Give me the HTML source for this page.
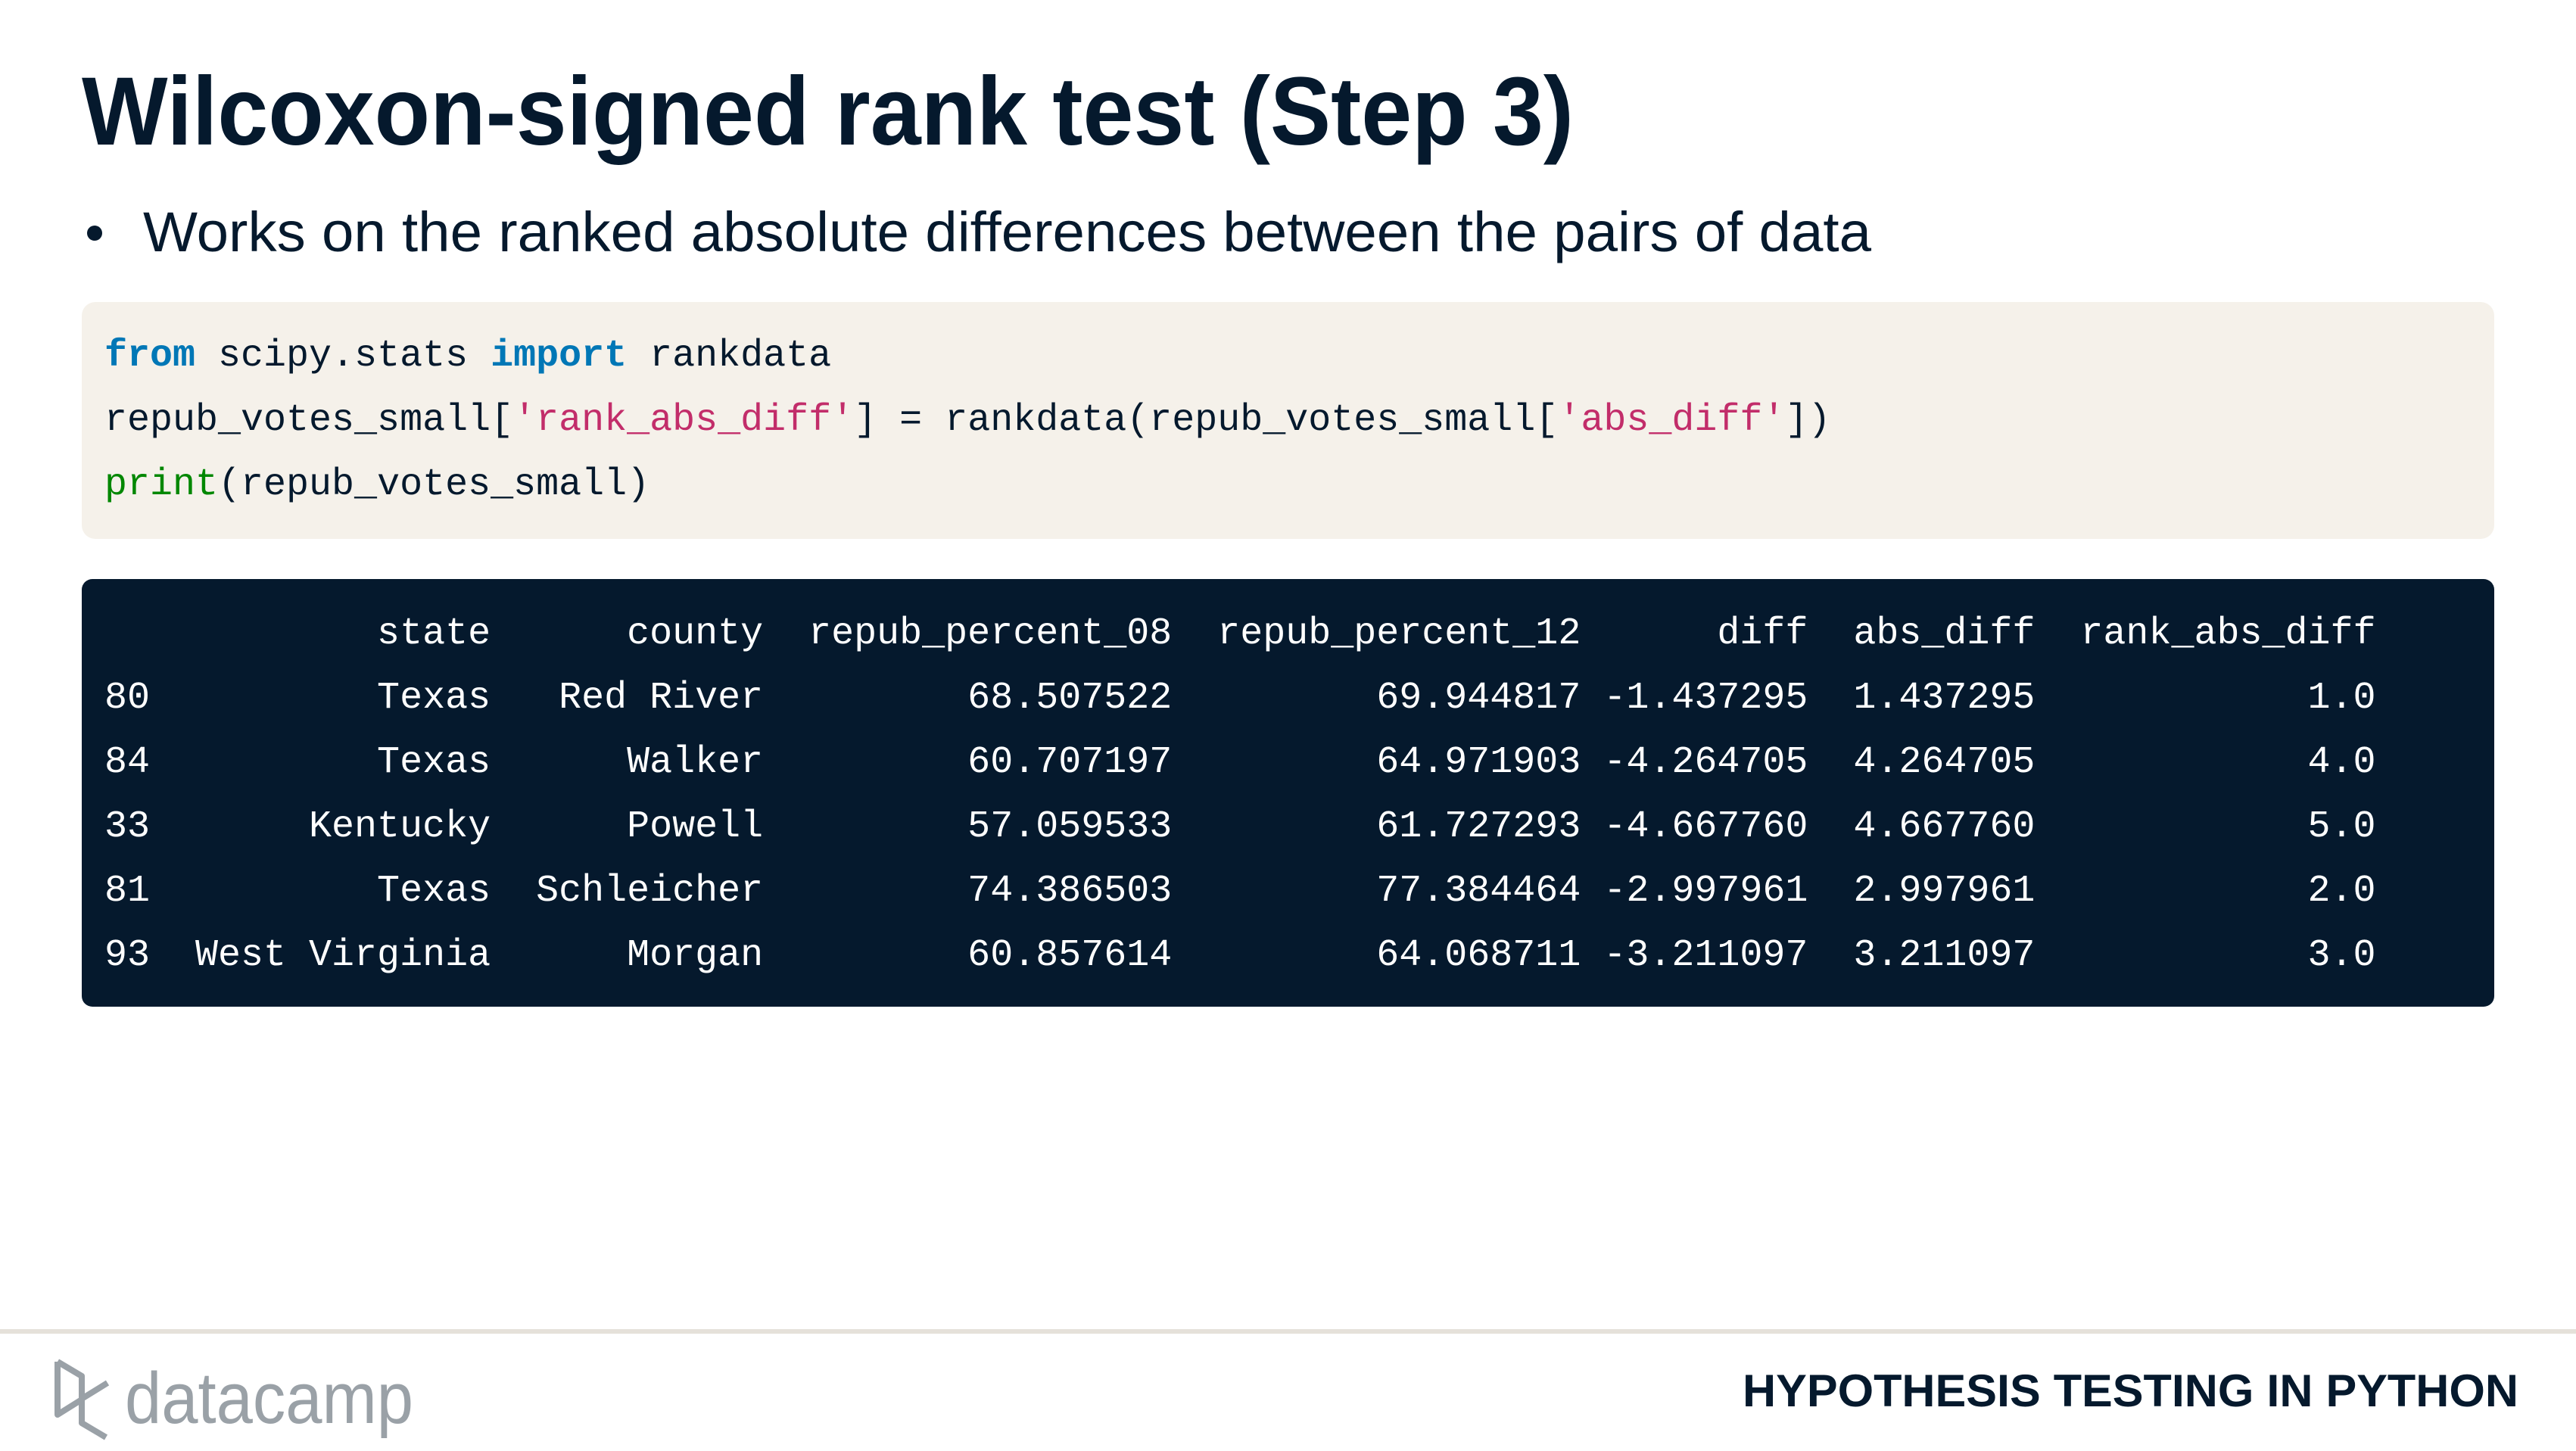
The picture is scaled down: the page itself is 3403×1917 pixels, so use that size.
<!DOCTYPE html>
<html><head><meta charset="utf-8"><style>
html,body{margin:0;padding:0;background:#fff;}
svg{display:block;}
.m{font-family:"Liberation Mono",monospace;font-size:50px;white-space:pre;}
</style></head><body>
<svg width="3403" height="1917" xmlns="http://www.w3.org/2000/svg">
<rect width="3403" height="1917" fill="#fff"/>
<text x="108" y="191" font-family="Liberation Sans, sans-serif" font-weight="bold" font-size="128" fill="#05192d" textLength="1971" lengthAdjust="spacingAndGlyphs">Wilcoxon-signed rank test (Step 3)</text>
<circle cx="125" cy="308" r="10" fill="#05192d"/>
<text x="189" y="332" font-family="Liberation Sans, sans-serif" font-size="74" fill="#05192d" textLength="2283" lengthAdjust="spacingAndGlyphs">Works on the ranked absolute differences between the pairs of data</text>
<rect x="108" y="399" width="3187" height="313" rx="18" fill="#f5f1ea"/>
<g class="m" fill="#05192d">
<text x="138" y="483" xml:space="preserve"><tspan fill="#0077b6" font-weight="bold">from</tspan> scipy.stats <tspan fill="#0077b6" font-weight="bold">import</tspan> rankdata</text>
<text x="138" y="568" xml:space="preserve">repub_votes_small[<tspan fill="#c22d6a">'rank_abs_diff'</tspan>] = rankdata(repub_votes_small[<tspan fill="#c22d6a">'abs_diff'</tspan>])</text>
<text x="138" y="653" xml:space="preserve"><tspan fill="#008700">print</tspan>(repub_votes_small)</text>
</g>
<rect x="108" y="765" width="3187" height="565" rx="14" fill="#05192d"/>
<g class="m" fill="#ffffff">
<text x="138" y="850" xml:space="preserve">            state      county  repub_percent_08  repub_percent_12      diff  abs_diff  rank_abs_diff</text>
<text x="138" y="935" xml:space="preserve">80          Texas   Red River         68.507522         69.944817 -1.437295  1.437295            1.0</text>
<text x="138" y="1020" xml:space="preserve">84          Texas      Walker         60.707197         64.971903 -4.264705  4.264705            4.0</text>
<text x="138" y="1105" xml:space="preserve">33       Kentucky      Powell         57.059533         61.727293 -4.667760  4.667760            5.0</text>
<text x="138" y="1190" xml:space="preserve">81          Texas  Schleicher         74.386503         77.384464 -2.997961  2.997961            2.0</text>
<text x="138" y="1275" xml:space="preserve">93  West Virginia      Morgan         60.857614         64.068711 -3.211097  3.211097            3.0</text>
</g>
<rect x="0" y="1756" width="3403" height="6" fill="#e5e1da"/>
<g fill="none" stroke="#9aa1a7" stroke-width="8" stroke-linejoin="round">
<path d="M76 1799 L76 1869 L108 1849 L108 1818 L76 1799"/>
<path d="M108 1849 L108 1880 L140 1899"/>
<path d="M108 1848 L142 1827"/>
</g>
<text x="165" y="1880" font-family="Liberation Sans, sans-serif" font-size="96" fill="#9aa1a7" textLength="381" lengthAdjust="spacingAndGlyphs">datacamp</text>
<text x="3327" y="1858" text-anchor="end" font-family="Liberation Sans, sans-serif" font-weight="bold" font-size="60" fill="#05192d" textLength="1025" lengthAdjust="spacingAndGlyphs">HYPOTHESIS TESTING IN PYTHON</text>
</svg>
</body></html>
